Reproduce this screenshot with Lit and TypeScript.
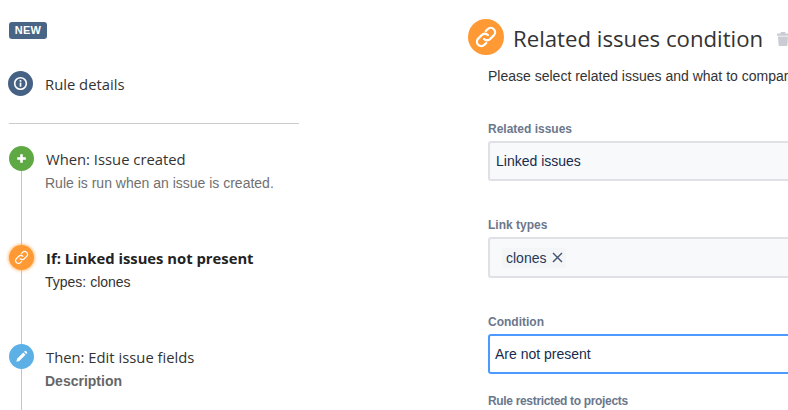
import { LitElement, html, css } from "lit";
import { customElement } from "lit/decorators.js";

const link = (size: number, w: number) => html`<svg width=${size} height=${size} viewBox="0 0 24 24" fill="none" stroke="#fff" stroke-width=${w} stroke-linecap="round" stroke-linejoin="round">
  <path d="M10.2 13.8a4 4 0 0 0 5.7 0l3.3-3.3a4 4 0 0 0-5.7-5.7l-1.7 1.7" />
  <path d="M13.8 10.2a4 4 0 0 0-5.7 0l-3.3 3.3a4 4 0 0 0 5.7 5.7l1.7-1.7" />
</svg>`;

@customElement("app-root")
export class AppRoot extends LitElement {
  static styles = css`
    :host { display: block; width: 788px; height: 410px; overflow: hidden; background: #fff; color: #333;
      font-family: "Liberation Sans", Arial, sans-serif; font-size: 14px; }
    .page { display: flex; height: 410px; }
    .left { width: 290px; margin-left: 9px; flex: none; display: flex; flex-direction: column; padding-top: 22px; box-sizing: border-box; }
    .badge { align-self: flex-start; width: 38px; height: 17px; border-radius: 3px; background: #486585; color: #fff;
      font-size: 11px; font-weight: 700; line-height: 17px; text-align: center; letter-spacing: 0.2px; }
    .details { display: flex; align-items: center; margin-top: 32px; gap: 12px; margin-left: -1px; }
    .circle { width: 25px; height: 25px; border-radius: 50%; display: flex; align-items: center; justify-content: center; flex: none; }
    .navy { background: #456184; }
    .green { background: #5fa944; }
    .orange { background: #ff9933; box-shadow: 0 0 3px 1px rgba(255,153,51,0.6); }
    .sky { background: #5cb0e6; }
    .title { font-family: "Open Sans", sans-serif; font-size: 14.8px; line-height: 20px; color: #333; }
    .rule { height: 1px; background: #ccc; margin-top: 27px; flex: none; }
    .steps { display: flex; flex-direction: column; margin-top: 22px; flex: 1; }
    .step { display: grid; grid-template-columns: 25px 1fr; column-gap: 12px; }
    .s1 { height: 99px; }
    .s2 { height: 99px; }
    .s3 { flex: 1; }
    .rail { display: flex; flex-direction: column; align-items: center; }
    .line { width: 1px; flex: 1; background: #c4c4c4; }
    .body { padding-top: 3px; }
    .strong { font-weight: 700; color: #222; font-size: 14.8px; }
    .sub { margin: 6px 0 0 -1px; line-height: 16px; font-size: 14px; }
    .muted { color: #707070; }
    .plain { color: #333; }
    .dark-muted { color: #666; font-weight: 700; }
    .right { flex: none; width: 300px; margin-left: 189px; padding-top: 19px; }
    .head { display: flex; align-items: center; margin-left: -20px; width: 340px; }
    .big { width: 36px; height: 36px; border-radius: 50%; background: #ff9933; display: flex; align-items: center; justify-content: center; flex: none; }
    h1 { margin: 4px 0 0 9px; font-family: "Open Sans", sans-serif; font-weight: 400; font-size: 22.2px; line-height: 32px; color: #333; white-space: nowrap; }
    .trash { margin-left: 13px; flex: none; margin-top: 4px; }
    .desc { margin: 13px 0 0; line-height: 16px; font-size: 14px; color: #333; white-space: nowrap; }
    .lbl { display: block; font-size: 12px; font-weight: 700; color: #6b778c; line-height: 16px; }
    .narrow { letter-spacing: -0.33px; }
    .field { margin-top: 4px; }
    .input { box-sizing: border-box; height: 40px; width: 400px; border: 2px solid #dfe1e6; border-radius: 3px; background: #f8f9fb;
      display: flex; align-items: center; padding-left: 6px; font-size: 14px; color: #172b4d; }
    .tall { height: 41px; padding-left: 12px; }
    .focus { border-color: #4c9aff; background: #fff; padding-left: 5px; }
    .tag { display: flex; align-items: center; gap: 6px; height: 20px; padding: 0 3px 0 4px; border-radius: 3px; background: #f4f5f7; color: #253858; font-size: 14px; }
    .g1 { margin-top: 37px; }
    .g2 { margin-top: 36px; }
    .g3 { margin-top: 36px; }
    .g4 { margin-top: 19px; }
  `;

  render() {
    return html`<div class="page">
      <aside class="left">
        <span class="badge">NEW</span>
        <div class="details">
          <span class="circle navy">
            <svg width="15" height="15" viewBox="0 0 16 16" fill="none"><circle cx="8" cy="8" r="6.2" stroke="#fff" stroke-width="1.7"/><rect x="7.1" y="7" width="1.8" height="4.4" fill="#fff"/><rect x="7.1" y="4.3" width="1.8" height="1.8" fill="#fff"/></svg>
          </span>
          <span class="title">Rule details</span>
        </div>
        <div class="rule"></div>
        <div class="steps">
          <div class="step s1">
            <div class="rail"><span class="circle green">
              <svg width="11" height="11" viewBox="0 0 11 11"><path d="M5.5 1.2v8.6M1.2 5.5h8.6" stroke="#fff" stroke-width="2.6"/></svg>
            </span><span class="line"></span></div>
            <div class="body"><div class="title">When: Issue created</div><div class="sub muted">Rule is run when an issue is created.</div></div>
          </div>
          <div class="step s2">
            <div class="rail"><span class="circle orange">${link(17, 1.7)}</span><span class="line"></span></div>
            <div class="body"><div class="title strong">If: Linked issues not present</div><div class="sub plain">Types: clones</div></div>
          </div>
          <div class="step s3">
            <div class="rail"><span class="circle sky">
              <svg width="15" height="15" viewBox="0 0 16 16"><path d="M2.5 13.5l.8-3.2 6.6-6.6 2.4 2.4-6.6 6.6z" fill="#fff"/><path d="M10.7 2.9l.6-.6a1.2 1.2 0 0 1 1.7 0l.7.7a1.2 1.2 0 0 1 0 1.7l-.6.6z" fill="#fff"/></svg>
            </span><span class="line"></span></div>
            <div class="body"><div class="title">Then: Edit issue fields</div><div class="sub dark-muted">Description</div></div>
          </div>
        </div>
      </aside>
      <main class="right">
        <div class="head">
          <span class="big">${link(26, 2.1)}</span>
          <h1>Related issues condition</h1>
          <svg class="trash" width="14" height="16" viewBox="0 0 14 16" fill="#c9ccd3"><rect x="4.5" y="1" width="5" height="2" rx=".8"/><rect x="1" y="2.6" width="12" height="2.2" rx=".6"/><path d="M2 5.6h10l-.6 8.6a1 1 0 0 1-1 .8H3.6a1 1 0 0 1-1-.8z"/></svg>
        </div>
        <p class="desc">Please select related issues and what to compar</p>
        <div class="g1"><label class="lbl">Related issues</label><div class="field input">Linked issues</div></div>
        <div class="g2"><label class="lbl">Link types</label><div class="field input tall"><span class="tag">clones
          <svg width="11" height="11" viewBox="0 0 11 11"><path d="M1 1l9 9M10 1l-9 9" stroke="#42526e" stroke-width="1.4"/></svg></span></div></div>
        <div class="g3"><label class="lbl">Condition</label><div class="field input focus">Are not present</div></div>
        <div class="g4"><label class="lbl narrow">Rule restricted to projects</label></div>
      </main>
    </div>`;
  }
}
